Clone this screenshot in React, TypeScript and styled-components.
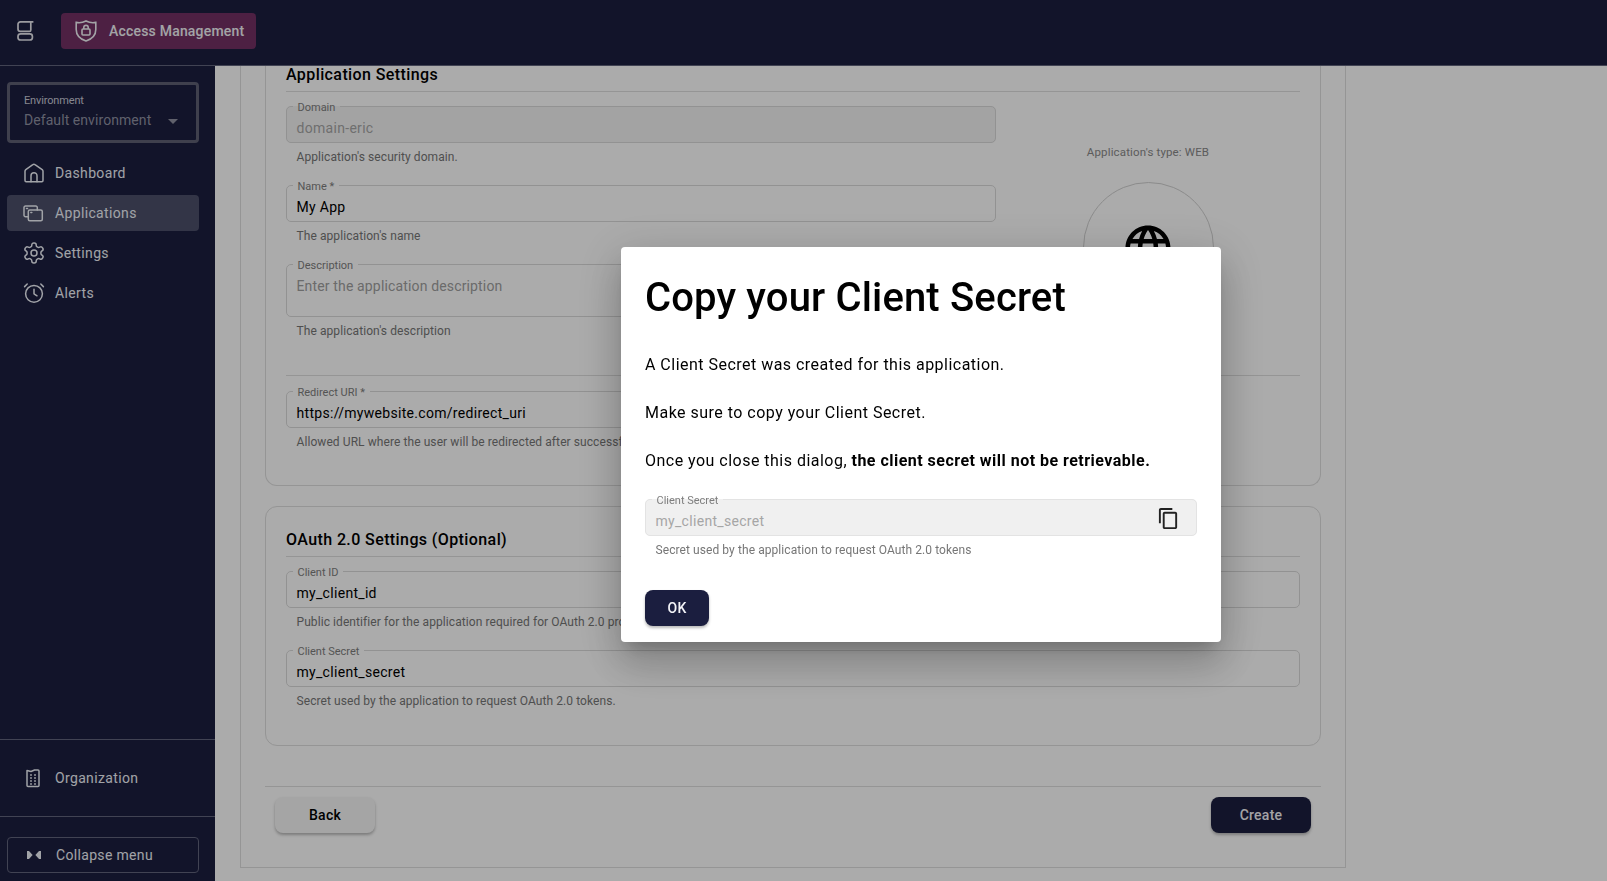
import React from "react";
import styled, { createGlobalStyle } from "styled-components";
import { MdLanguage, MdOutlineContentCopy } from "react-icons/md";

const GlobalStyle = createGlobalStyle`
  html, body {
    margin: 0;
    height: 100%;
    overflow: hidden;
    background: #fff;
  }
  * {
    box-sizing: border-box;
  }
  body {
    font-family: Roboto, "Liberation Sans", sans-serif;
    color: #000;
  }
`;

const Page = styled.div`
  width: 1607px;
  height: 881px;
  display: flex;
  flex-direction: column;
  overflow: hidden;
`;

const TopBar = styled.header`
  height: 66px;
  flex: none;
  display: flex;
  align-items: center;
  padding: 0 0 4px 17px;
  gap: 27px;
  background: #1b1e3f;
  border-bottom: 1px solid #62647c;
`;

const ProductBadge = styled.div`
  width: 195px;
  height: 36px;
  display: flex;
  align-items: center;
  gap: 12px;
  padding-left: 14px;
  border-radius: 4px;
  background: #733165;
  color: #f4f4f8;
  font-size: 14px;
  font-weight: 500;
  letter-spacing: 0.2px;
`;

const Body = styled.div`
  flex: 1;
  min-height: 0;
  display: flex;
`;

const Sidebar = styled.aside`
  width: 215px;
  flex: none;
  display: flex;
  flex-direction: column;
  background: #1b1e3f;
  color: #f0f3fa;
`;

const SidebarTop = styled.div`
  flex: 1;
  padding: 16px 16px 0 7px;
`;

const EnvironmentBox = styled.div`
  height: 61px;
  margin-bottom: 12px;
  padding: 9px 14px 0;
  border: 3px solid #5e6074;
  border-radius: 4px;
  position: relative;
`;

const EnvironmentLabel = styled.div`
  font-size: 11px;
  line-height: 14px;
  letter-spacing: -0.15px;
  color: #c8cad6;
`;

const EnvironmentValue = styled.div`
  margin-top: 2px;
  font-size: 14px;
  line-height: 20px;
  letter-spacing: 0.07px;
  color: #8f91a2;
`;

const EnvironmentCaret = styled.span`
  position: absolute;
  right: 18px;
  top: 34px;
  border-left: 5px solid transparent;
  border-right: 5px solid transparent;
  border-top: 5px solid #8f91a2;
`;

const NavList = styled.nav`
  display: flex;
  flex-direction: column;
  gap: 4px;
`;

const NavItem = styled.div<{ $active?: boolean }>`
  height: 36px;
  display: flex;
  align-items: center;
  gap: 10px;
  padding-left: 16px;
  border-radius: 4px;
  font-size: 14px;
  letter-spacing: 0.35px;
  background: ${(p) => (p.$active ? "#4c4f6a" : "transparent")};
`;

const SidebarSection = styled.div`
  padding: 20px 16px 20px 7px;
  border-top: 1px solid #62647c;
`;

const CollapseButton = styled.div`
  height: 36px;
  display: flex;
  align-items: center;
  gap: 15px;
  padding-left: 19px;
  border: 1px solid #62647c;
  border-radius: 4px;
  font-size: 14px;
  letter-spacing: 0.33px;
`;

const CollapseSection = styled.div`
  padding: 20px 16px 8px 7px;
  border-top: 1px solid #62647c;
`;

const Main = styled.main`
  flex: 1;
  min-width: 0;
  padding: 0 261px 13px 25px;
  background: #fff;
`;

const Panel = styled.div`
  height: 100%;
  padding: 0 24px;
  border: 1px solid #dedede;
  border-top: none;
`;

const Section = styled.section<{ $clipped?: boolean }>`
  height: ${(p) => (p.$clipped ? "420px" : "240px")};
  margin-bottom: 20px;
  padding: ${(p) => (p.$clipped ? "1px 20px 0" : "25px 20px 0")};
  border: 1px solid #dedede;
  border-radius: 12px;
  ${(p) => p.$clipped && "border-top: none; border-top-left-radius: 0; border-top-right-radius: 0;"}
`;

const SectionTitle = styled.h2`
  margin: 0 0 8px;
  padding-bottom: 8px;
  font-size: 16px;
  line-height: 16px;
  font-weight: 500;
  letter-spacing: 0.4px;
  border-bottom: 1px solid #dedede;
`;

const SettingsGrid = styled.div`
  display: flex;
`;

const SettingsFields = styled.div`
  width: 710px;
  flex: none;
  display: flex;
  flex-direction: column;
`;

const TypeColumn = styled.div`
  flex: 1;
  display: flex;
  flex-direction: column;
  align-items: center;
  padding-top: 44px;
`;

const TypeLabel = styled.div`
  font-size: 11.5px;
  line-height: 16px;
  letter-spacing: 0.15px;
  color: #8a8a8a;
  margin-bottom: 22px;
`;

const TypeCircle = styled.div`
  width: 131px;
  height: 131px;
  display: flex;
  align-items: center;
  justify-content: center;
  border: 1px solid #d0d0d0;
  border-radius: 50%;
  font-size: 54px;
`;

const Field = styled.div`
  display: flex;
  flex-direction: column;
  margin-bottom: 14px;
`;

const FieldBox = styled.fieldset<{ $disabled?: boolean; $tall?: boolean; $modal?: boolean }>`
  margin: 0;
  min-width: 0;
  height: ${(p) => (p.$tall ? "59px" : "43px")};
  padding: 0 9.5px;
  display: block;
  position: relative;
  border: 1px solid ${(p) => (p.$modal ? "#e3e3e3" : "#dadada")};
  border-radius: 5px;
  background: ${(p) => (p.$modal ? "#f0f0f0" : p.$disabled ? "#f4f4f4" : "transparent")};
`;

const FieldLegend = styled.legend`
  margin-left: -4px;
  padding: 0 5px;
  font-size: 11px;
  line-height: 12px;
  letter-spacing: 0;
  color: #7e7e7e;
  transform: translateY(2px);
`;

const FieldValue = styled.div<{ $muted?: boolean; $placeholder?: boolean }>`
  margin-top: 6px;
  font-size: 14px;
  line-height: 20px;
  letter-spacing: ${(p) => (p.$placeholder ? "0.15px" : "0.3px")};
  color: ${(p) => (p.$muted ? "#a6a6a6" : p.$placeholder ? "#a0a0a0" : "#000")};
`;

const FieldHint = styled.div`
  margin-top: 6px;
  padding-left: 10.5px;
  font-size: 12px;
  line-height: 16px;
  letter-spacing: 0.08px;
  white-space: nowrap;
  color: #767676;
`;

const Rule = styled.hr`
  margin: 22px 0 9px;
  border: none;
  border-top: 1px solid #dedede;
`;

const ActionBar = styled.div`
  display: flex;
  justify-content: space-between;
  margin-top: 40px;
  padding: 10px 10px 0;
  border-top: 1px solid #dedede;
`;

const Button = styled.button<{ $primary?: boolean }>`
  width: 100px;
  height: 36px;
  padding: 0;
  border: none;
  border-radius: 8px;
  font-family: inherit;
  font-size: 14px;
  font-weight: 500;
  letter-spacing: 0.25px;
  color: ${(p) => (p.$primary ? "#f4f4f8" : "#000")};
  background: ${(p) => (p.$primary ? "#1b1e3f" : "#f7f7f7")};
  box-shadow: 0 2px 3px rgba(0, 0, 0, 0.28);
`;

const Overlay = styled.div`
  position: fixed;
  inset: 0;
  display: flex;
  align-items: flex-start;
  padding: 247px 0 0 621px;
  background: rgba(0, 0, 0, 0.33);
`;

const Dialog = styled.div`
  width: 600px;
  height: 395px;
  padding: 27px 24px 16px;
  border-radius: 4px;
  background: #fff;
  box-shadow: 0 11px 15px -7px rgba(0, 0, 0, 0.2), 0 24px 38px 3px rgba(0, 0, 0, 0.14),
    0 9px 46px 8px rgba(0, 0, 0, 0.12);
`;

const DialogTitle = styled.h1`
  margin: 0 0 31px;
  font-size: 40px;
  line-height: 48px;
  font-weight: 500;
  letter-spacing: 0.15px;
`;

const DialogText = styled.p`
  margin: 0 0 20px;
  font-size: 16px;
  line-height: 24px;
  letter-spacing: 0.48px;
  strong {
    font-weight: 700;
  }
`;

const DialogField = styled(Field)`
  margin-bottom: 32px;
`;

const CopyButton = styled.span`
  position: absolute;
  right: 16px;
  top: 2px;
  font-size: 23px;
  color: #222;
`;

const OkButton = styled(Button)`
  width: 64px;
  display: block;
`;

const NavIcon = styled.svg`
  width: 22px;
  height: 22px;
  flex: none;
  fill: none;
  stroke: currentColor;
  stroke-width: 1.5;
  stroke-linecap: round;
  stroke-linejoin: round;
`;

const Logo = () => (
  <svg width="17" height="20" viewBox="0 0 17 20" fill="none" stroke="#e8e8ee" strokeWidth="1.7" aria-hidden>
    <path d="M16.4.9H3.4A2.4 2.4 0 0 0 1 3.3v4.6a2.4 2.4 0 0 0 2.4 2.4h9a1.4 1.4 0 0 0 1.4-1.4V.9" />
    <rect x="1" y="12.8" width="14.4" height="6.2" rx="2.6" />
  </svg>
);

const ShieldIcon = () => (
  <svg width="22" height="22" viewBox="0 0 22 22" fill="none" stroke="#f4f4f8" strokeWidth="1.6" aria-hidden>
    <path d="M1.2 2.4C4 3 8 2.5 11 1c3 1.5 7 2 9.8 1.4V9.5c0 6-4.6 9.8-9.8 11.5C5.8 19.3 1.2 15.5 1.2 9.5z" />
    <rect x="7" y="9" width="8" height="6" rx="1" />
    <path d="M8.8 9V7.6a2.2 2.2 0 0 1 4.4 0V9" />
  </svg>
);

const HomeIcon = () => (
  <NavIcon viewBox="0 0 22 22">
    <path d="M3.2 19.7A1.2 1.2 0 0 1 2 18.5V9.2a2 2 0 0 1 .8-1.6l7-5a1.8 1.8 0 0 1 2.2 0l7.2 5a2 2 0 0 1 .8 1.6v9.3a1.2 1.2 0 0 1-1.2 1.2z" />
    <path d="M8 19.7v-6a3 3 0 0 1 6 0v6" />
  </NavIcon>
);

const ApplicationsIcon = () => (
  <NavIcon viewBox="0 0 22 22">
    <path d="M5.3 14.7H2.5A1.5 1.5 0 0 1 1 13.2V5.5A1.5 1.5 0 0 1 2.5 4h10.3a1.5 1.5 0 0 1 1.5 1.5V8" />
    <path d="M3.5 6.5h1" />
    <rect x="5.3" y="8" width="14" height="10.7" rx="1.5" />
    <path d="M7.8 10.5h1" />
  </NavIcon>
);

const SettingsIcon = () => (
  <NavIcon viewBox="1 1 22 22">
    <path d="M12.22 2h-.44a2 2 0 0 0-2 2v.18a2 2 0 0 1-1 1.73l-.43.25a2 2 0 0 1-2 0l-.15-.08a2 2 0 0 0-2.73.73l-.22.38a2 2 0 0 0 .73 2.73l.15.1a2 2 0 0 1 1 1.72v.51a2 2 0 0 1-1 1.74l-.15.09a2 2 0 0 0-.73 2.73l.22.38a2 2 0 0 0 2.73.73l.15-.08a2 2 0 0 1 2 0l.43.25a2 2 0 0 1 1 1.73V20a2 2 0 0 0 2 2h.44a2 2 0 0 0 2-2v-.18a2 2 0 0 1 1-1.73l.43-.25a2 2 0 0 1 2 0l.15.08a2 2 0 0 0 2.73-.73l.22-.39a2 2 0 0 0-.73-2.73l-.15-.08a2 2 0 0 1-1-1.74v-.5a2 2 0 0 1 1-1.74l.15-.09a2 2 0 0 0 .73-2.73l-.22-.38a2 2 0 0 0-2.73-.73l-.15.08a2 2 0 0 1-2 0l-.43-.25a2 2 0 0 1-1-1.73V4a2 2 0 0 0-2-2z" />
    <circle cx="12" cy="12" r="3" />
  </NavIcon>
);

const AlarmIcon = () => (
  <NavIcon viewBox="0 0 22 22">
    <circle cx="11" cy="11.8" r="8.4" />
    <path d="M11 7.3v4.5l3 2" />
    <path d="M1.6 4.6l2.6-2.6M20.4 4.6L17.8 2" />
  </NavIcon>
);

const BuildingIcon = () => (
  <NavIcon viewBox="0 0 22 22">
    <path d="M4 3.5v15a1 1 0 0 0 1 1h10a1 1 0 0 0 1-1V4a1 1 0 0 0-1-1h-3.5L8 4.5z" />
    <path d="M8 8h.01M12 8h.01M8 11h.01M12 11h.01M8 14h.01M12 14h.01M8 17h.01M12 17h.01" strokeWidth="1.8" />
  </NavIcon>
);

const CollapseIcon = () => (
  <svg width="14" height="10" viewBox="0 0 14 10" fill="currentColor" aria-hidden>
    <path d="M0 1h2l3.6 4L2 9H0z" />
    <path d="M14 1h-2L8.4 5 12 9h2z" />
  </svg>
);

export default function App() {
  return (
    <>
      <GlobalStyle />
      <Page>
        <TopBar>
          <Logo />
          <ProductBadge>
            <ShieldIcon />
            Access Management
          </ProductBadge>
        </TopBar>
        <Body>
          <Sidebar>
            <SidebarTop>
              <EnvironmentBox>
                <EnvironmentLabel>Environment</EnvironmentLabel>
                <EnvironmentValue>Default environment</EnvironmentValue>
                <EnvironmentCaret />
              </EnvironmentBox>
              <NavList>
                <NavItem><HomeIcon />Dashboard</NavItem>
                <NavItem $active><ApplicationsIcon />Applications</NavItem>
                <NavItem><SettingsIcon />Settings</NavItem>
                <NavItem><AlarmIcon />Alerts</NavItem>
              </NavList>
            </SidebarTop>
            <SidebarSection>
              <NavItem><BuildingIcon />Organization</NavItem>
            </SidebarSection>
            <CollapseSection>
              <CollapseButton><CollapseIcon />Collapse menu</CollapseButton>
            </CollapseSection>
          </Sidebar>
          <Main>
            <Panel>
              <Section $clipped>
                <SectionTitle>Application Settings</SectionTitle>
                <SettingsGrid>
                  <SettingsFields>
                    <Field>
                      <FieldBox $disabled>
                        <FieldLegend>Domain</FieldLegend>
                        <FieldValue $muted>domain-eric</FieldValue>
                      </FieldBox>
                      <FieldHint>Application's security domain.</FieldHint>
                    </Field>
                    <Field>
                      <FieldBox>
                        <FieldLegend>Name *</FieldLegend>
                        <FieldValue>My App</FieldValue>
                      </FieldBox>
                      <FieldHint>The application's name</FieldHint>
                    </Field>
                    <Field>
                      <FieldBox $tall>
                        <FieldLegend>Description</FieldLegend>
                        <FieldValue $placeholder>Enter the application description</FieldValue>
                      </FieldBox>
                      <FieldHint>The application's description</FieldHint>
                    </Field>
                  </SettingsFields>
                  <TypeColumn>
                    <TypeLabel>Application's type: WEB</TypeLabel>
                    <TypeCircle><MdLanguage /></TypeCircle>
                  </TypeColumn>
                </SettingsGrid>
                <Rule />
                <SettingsFields>
                  <Field>
                    <FieldBox>
                      <FieldLegend>Redirect URI *</FieldLegend>
                      <FieldValue>https://mywebsite.com/redirect_uri</FieldValue>
                    </FieldBox>
                    <FieldHint>Allowed URL where the user will be redirected after successful authentication</FieldHint>
                  </Field>
                </SettingsFields>
              </Section>
              <Section>
                <SectionTitle>OAuth 2.0 Settings (Optional)</SectionTitle>
                <Field>
                  <FieldBox>
                    <FieldLegend>Client ID</FieldLegend>
                    <FieldValue>my_client_id</FieldValue>
                  </FieldBox>
                  <FieldHint>Public identifier for the application required for OAuth 2.0 protocol flows.</FieldHint>
                </Field>
                <Field>
                  <FieldBox>
                    <FieldLegend>Client Secret</FieldLegend>
                    <FieldValue>my_client_secret</FieldValue>
                  </FieldBox>
                  <FieldHint>Secret used by the application to request OAuth 2.0 tokens.</FieldHint>
                </Field>
              </Section>
              <ActionBar>
                <Button>Back</Button>
                <Button $primary>Create</Button>
              </ActionBar>
            </Panel>
          </Main>
        </Body>
      </Page>
      <Overlay>
        <Dialog>
          <DialogTitle>Copy your Client Secret</DialogTitle>
          <DialogText>
            A Client Secret was created for this application.
            <br />
            <br />
            Make sure to copy your Client Secret.
            <br />
            <br />
            Once you close this dialog, <strong>the client secret will not be retrievable.</strong>
          </DialogText>
          <DialogField>
            <FieldBox $modal>
              <FieldLegend>Client Secret</FieldLegend>
              <FieldValue $muted>my_client_secret</FieldValue>
              <CopyButton><MdOutlineContentCopy /></CopyButton>
            </FieldBox>
            <FieldHint>Secret used by the application to request OAuth 2.0 tokens</FieldHint>
          </DialogField>
          <OkButton $primary>OK</OkButton>
        </Dialog>
      </Overlay>
    </>
  );
}
